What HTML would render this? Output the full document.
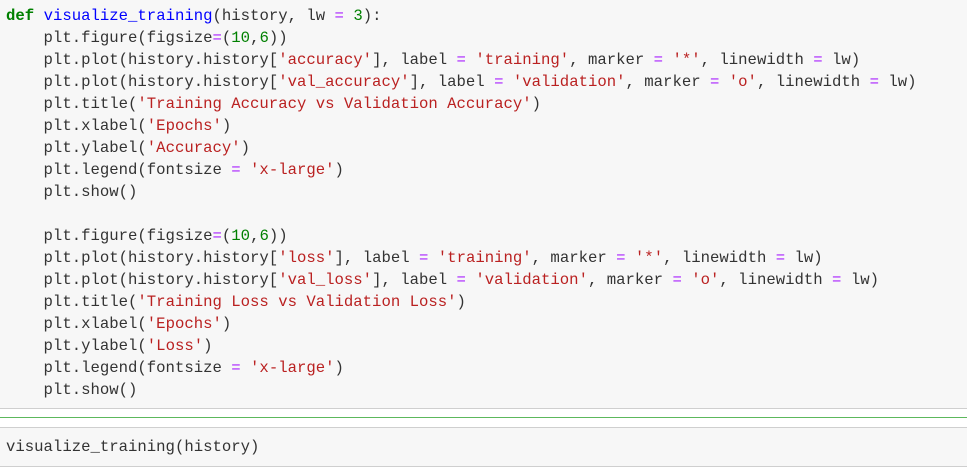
<!DOCTYPE html>
<html><head><meta charset="utf-8"><style>
html,body{margin:0;padding:0;width:967px;height:468px;overflow:hidden;background:#fff}
pre{margin:0;font-family:"Liberation Mono","Noto Sans CJK SC",monospace;font-size:15.65px;line-height:22px;color:#333;white-space:pre}
.c1{position:absolute;left:0;top:0;width:967px;height:408px;background:#f7f7f7;border-bottom:1px solid #cfcfcf}
.c1 pre{position:absolute;left:6px;top:5px}
.g{position:absolute;left:0;top:417px;width:967px;height:1px;background:#5cb85c}
.c2{position:absolute;left:0;top:427px;width:967px;height:38px;background:#f7f7f7;border-top:1px solid #cfcfcf;border-bottom:1px solid #cfcfcf}
.c2 pre{position:absolute;left:6px;top:8px}
.k{color:#008000;font-weight:bold}.f{color:#0000ff}.s{color:#ba2121}.n{color:#008000}.o{color:#aa22ff}
</style></head><body>
<div class="c1"><pre><span class="k">def</span> <span class="f">visualize_training</span>(history, lw <span class="o">=</span> <span class="n">3</span>):
    plt.figure(figsize<span class="o">=</span>(<span class="n">10</span>,<span class="n">6</span>))
    plt.plot(history.history[<span class="s">'accuracy'</span>], label <span class="o">=</span> <span class="s">'training'</span>, marker <span class="o">=</span> <span class="s">'*'</span>, linewidth <span class="o">=</span> lw)
    plt.plot(history.history[<span class="s">'val_accuracy'</span>], label <span class="o">=</span> <span class="s">'validation'</span>, marker <span class="o">=</span> <span class="s">'o'</span>, linewidth <span class="o">=</span> lw)
    plt.title(<span class="s">'Training Accuracy vs Validation Accuracy'</span>)
    plt.xlabel(<span class="s">'Epochs'</span>)
    plt.ylabel(<span class="s">'Accuracy'</span>)
    plt.legend(fontsize <span class="o">=</span> <span class="s">'x-large'</span>)
    plt.show()

    plt.figure(figsize<span class="o">=</span>(<span class="n">10</span>,<span class="n">6</span>))
    plt.plot(history.history[<span class="s">'loss'</span>], label <span class="o">=</span> <span class="s">'training'</span>, marker <span class="o">=</span> <span class="s">'*'</span>, linewidth <span class="o">=</span> lw)
    plt.plot(history.history[<span class="s">'val_loss'</span>], label <span class="o">=</span> <span class="s">'validation'</span>, marker <span class="o">=</span> <span class="s">'o'</span>, linewidth <span class="o">=</span> lw)
    plt.title(<span class="s">'Training Loss vs Validation Loss'</span>)
    plt.xlabel(<span class="s">'Epochs'</span>)
    plt.ylabel(<span class="s">'Loss'</span>)
    plt.legend(fontsize <span class="o">=</span> <span class="s">'x-large'</span>)
    plt.show()</pre></div>
<div class="g"></div>
<div class="c2"><pre>visualize_training(history)</pre></div>
</body></html>
